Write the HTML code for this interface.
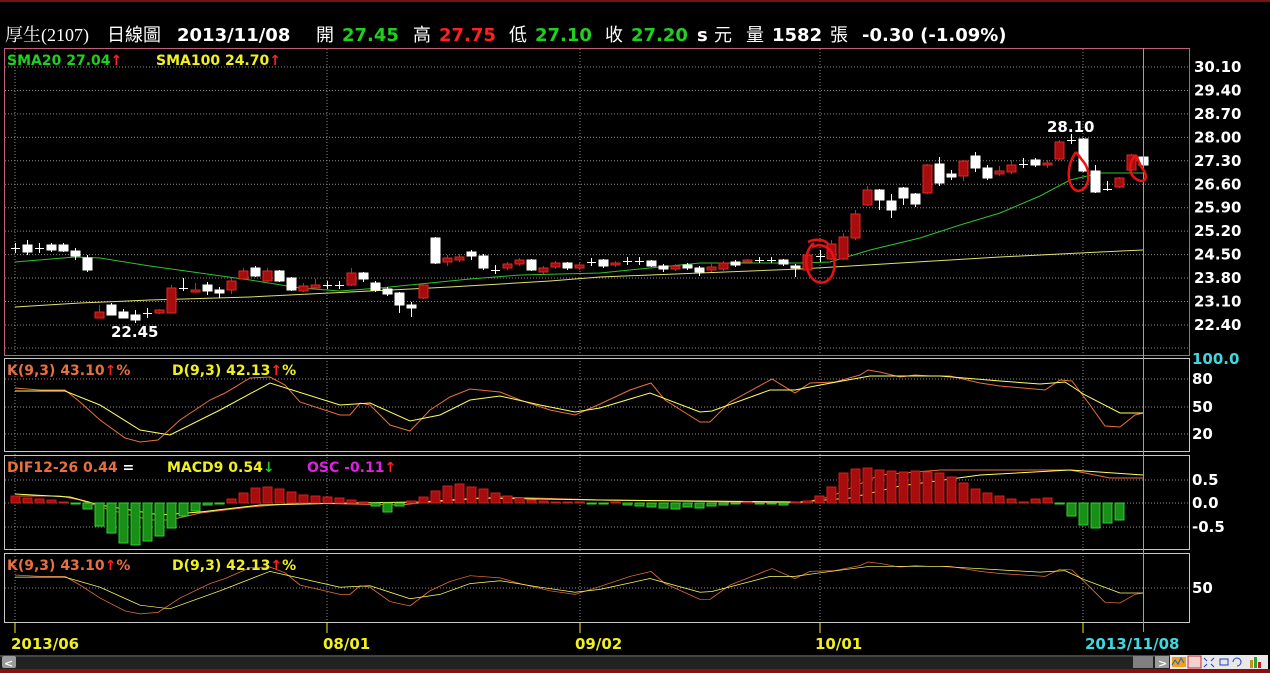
<!DOCTYPE html>
<html><head><meta charset="utf-8"><style>
html,body{margin:0;padding:0;background:#000;width:1270px;height:673px;overflow:hidden}
svg{display:block}
text{font-family:"DejaVu Sans","Noto Sans CJK TC",sans-serif;font-weight:bold}
.cj{font-family:"Noto Sans CJK TC",sans-serif;font-weight:normal}
</style></head><body>
<svg id="s" width="1270" height="673" xmlns="http://www.w3.org/2000/svg">
<rect x="0" y="0" width="1270" height="673" fill="#000"/>
<rect x="0" y="0" width="1270" height="2" fill="#7a1010"/>
<g id="grid" stroke="#8a8a8a" stroke-width="1" stroke-dasharray="1,2" fill="none"></g>
<!-- header -->
<text y="41" font-size="18" fill="#fff"><tspan x="5" font-family="Liberation Serif,'Noto Serif CJK TC',serif" font-weight="normal">厚生(2107)</tspan><tspan x="107" class="cj">日線圖</tspan><tspan x="177">2013/11/08</tspan><tspan x="316" class="cj">開</tspan><tspan x="342" fill="#20d020">27.45</tspan><tspan x="413" class="cj">高</tspan><tspan x="439" fill="#ff2020">27.75</tspan><tspan x="509" class="cj">低</tspan><tspan x="535" fill="#20d020">27.10</tspan><tspan x="605" class="cj">收</tspan><tspan x="631" fill="#20d020">27.20</tspan><tspan x="697">s</tspan><tspan x="714" class="cj">元</tspan><tspan x="746" class="cj">量</tspan><tspan x="772">1582</tspan><tspan x="830" class="cj">張</tspan><tspan x="862">-0.30 (-1.09%)</tspan></text>
<!-- frames -->
<rect x="4.5" y="48.5" width="1185" height="307" fill="none" stroke="#c06078"/>
<rect x="4.5" y="358.5" width="1185" height="93" fill="none" stroke="#c8c8c8"/>
<rect x="4.5" y="455.5" width="1185" height="94" fill="none" stroke="#c8c8c8"/>
<rect x="4.5" y="553.5" width="1185" height="69" fill="none" stroke="#c8c8c8"/>
<g id="lines" fill="none" stroke-width="1"></g>
<g id="candles"></g>
<g id="macd"></g>
<line x1="1143.5" y1="48" x2="1143.5" y2="632" stroke="#40c8d0" stroke-width="1"/>
<g fill="none" stroke="#ee1010" stroke-width="2.5">
<path d="M814,243 C804,250 803,272 815,281 C830,288 838,270 833,255 C828,244 818,244 812,247 M808,242 C816,238 826,240 828,244"/>
<path d="M1076,152 C1066,165 1066,188 1078,191 C1090,190 1092,170 1082,160 C1079,156 1077,153 1076,152"/>
<path d="M1136,155 C1128,162 1128,176 1138,180 C1147,184 1148,175 1142,168 C1139,163 1138,159 1136,155"/>
</g>
<text x="1047" y="132" font-size="15" fill="#fff">28.10</text>
<text x="111" y="337" font-size="15" fill="#fff">22.45</text>
<g font-size="14">
<text x="7" y="65" fill="#20d020">SMA20 27.04<tspan fill="#ff2020">↑</tspan></text>
<text x="156" y="65" fill="#f0f020">SMA100 24.70<tspan fill="#ff2020">↑</tspan></text>
<text x="7" y="375" fill="#e87040">K(9,3) 43.10<tspan fill="#ff2020">↑</tspan>%</text>
<text x="172" y="375" fill="#f0f020">D(9,3) 42.13<tspan fill="#ff2020">↑</tspan>%</text>
<text x="7" y="472" fill="#e87040">DIF12-26 0.44<tspan fill="#fff"> =</tspan></text>
<text x="167" y="472" fill="#f0f020">MACD9 0.54<tspan fill="#20d020">↓</tspan></text>
<text x="307" y="472" fill="#e020e0">OSC -0.11<tspan fill="#ff2020">↑</tspan></text>
<text x="7" y="570" fill="#e87040">K(9,3) 43.10<tspan fill="#ff2020">↑</tspan>%</text>
<text x="172" y="570" fill="#f0f020">D(9,3) 42.13<tspan fill="#ff2020">↑</tspan>%</text>
</g>
<g id="axis" font-size="15" fill="#fff"></g>
<g stroke="#f0f020"><line x1="15" y1="622" x2="15" y2="633"/><line x1="327" y1="622" x2="327" y2="633"/><line x1="580" y1="622" x2="580" y2="633"/><line x1="820" y1="622" x2="820" y2="633"/><line x1="1083" y1="622" x2="1083" y2="633"/></g>
<g font-size="15" fill="#f0f020">
<text x="11" y="649">2013/06</text><text x="323" y="649">08/01</text><text x="575" y="649">09/02</text><text x="815" y="649">10/01</text>
<text x="1085" y="649" fill="#40d8e0">2013/11/08</text></g>
<rect x="0" y="655" width="1170" height="14" fill="#222"/>
<rect x="0" y="655" width="1170" height="2" fill="#444"/>
<rect x="2" y="656" width="14" height="12" fill="#9a9a9a" rx="2"/>
<text x="4" y="667" font-size="11" fill="#fff">&lt;</text>
<rect x="1133" y="656" width="20" height="12" fill="#808080"/>
<rect x="1155" y="656" width="14" height="12" fill="#9a9a9a"/>
<text x="1158" y="667" font-size="11" fill="#fff">&gt;</text>
<rect x="1170" y="655" width="98" height="14" fill="#e8e8e8"/>
<rect x="1172" y="657" width="14" height="10" fill="#f0a020"/><path d="M1172,665 l3,-5 3,4 3,-6 3,5" stroke="#2060c0" fill="none"/>
<rect x="1188" y="656" width="13" height="12" fill="#f4d0d0" stroke="#c03030"/>
<g stroke="#2040c0" fill="none"><path d="M1204,658 l3,3 M1214,658 l-3,3 M1204,667 l3,-3 M1214,667 l-3,-3"/><rect x="1220" y="659" width="8" height="6"/><path d="M1233,662 a4,4 0 1 1 4,4"/></g>
<rect x="1250" y="660" width="3" height="8" fill="#c09020"/><rect x="1254" y="657" width="3" height="11" fill="#30a030"/><rect x="1258" y="662" width="3" height="6" fill="#c02020"/>
<rect x="0" y="669" width="1270" height="4" fill="#8a1010"/>
</svg>
<script>
const NS="http://www.w3.org/2000/svg";
function el(p,t,a){const e=document.createElementNS(NS,t);for(const k in a)e.setAttribute(k,a[k]);p.appendChild(e);return e;}
const g=document.getElementById('grid');
const labels=["30.10","29.40","28.70","28.00","27.30","26.60","25.90","25.20","24.50","23.80","23.10","22.40"];
const ax=document.getElementById('axis');
labels.forEach((l,i)=>{const y=67+i*23.45;el(g,'line',{x1:5,x2:1189,y1:y,y2:y});const t=el(ax,'text',{x:1194,y:y+5});t.textContent=l;});
el(g,'line',{x1:5,x2:1189,y1:348,y2:348});
[[379,"80"],[407,"50"],[434,"20"]].forEach(([y,l])=>{el(g,'line',{x1:5,x2:1189,y1:y,y2:y});const t=el(ax,'text',{x:1192,y:y+5});t.textContent=l;});
const c=el(ax,'text',{x:1192,y:364,fill:'#40d8e0'});c.textContent="100.0";
[[480,"0.5"],[503,"0.0"],[527,"-0.5"]].forEach(([y,l])=>{el(g,'line',{x1:5,x2:1189,y1:y,y2:y});const t=el(ax,'text',{x:1192,y:y+5});t.textContent=l;});
el(g,'line',{x1:5,x2:1189,y1:588,y2:588});{const t=el(ax,'text',{x:1192,y:593});t.textContent="50";}
[15,327,580,820,1083].forEach(x=>{el(g,'line',{x1:x,x2:x,y1:49,y2:622});});
const C=[
[15,248,248,'x',243,253],[27,245,252,'w',240,255],[39,248,250,'x',243,253],[51,245,250,'w',243,252],[63,245,251,'w',243,252],[75,251,256,'w',248,260],[87,258,270,'w',255,272],
[99,312,318,'r',305,318],[111,305,315,'w',303,315],[123,312,318,'w',309,318],[135,315,320,'w',310,323],[147,313,313,'x',308,318],[159,310,313,'r',309,314],[171,288,313,'r',285,313],
[183,288,288,'x',278,291],[195,290,292,'r',283,293],[207,285,291,'w',282,295],[219,290,293,'w',287,298],[231,281,290,'r',278,294],[243,271,279,'r',268,280],[255,268,276,'w',266,277],
[267,271,281,'r',268,283],[279,271,281,'w',270,282],[291,278,290,'w',277,291],[303,286,291,'r',283,292],[315,285,288,'r',279,290],[327,285,285,'x',281,289],[339,285,285,'x',281,289],
[351,273,285,'r',268,286],[363,273,279,'w',272,282],[375,283,290,'w',281,292],[387,289,294,'w',287,296],[399,293,305,'w',292,313],[411,305,308,'w',302,317],[423,285,298,'r',284,299],
[435,238,263,'w',237,264],[447,258,262,'r',255,266],[459,257,260,'r',254,262],[471,252,256,'w',250,260],[483,256,268,'w',254,270],[495,270,270,'x',265,274],[507,264,268,'r',262,270],
[519,260,264,'r',258,266],[531,260,270,'w',259,271],[543,268,272,'r',266,274],[555,263,267,'r',261,269],[567,263,268,'w',262,270],[579,265,268,'r',263,270],[591,262,262,'x',258,266],
[603,260,266,'w',259,268],[615,263,265,'r',261,267],[627,261,261,'x',257,265],[639,261,261,'x',257,265],[651,261,266,'w',260,267],[663,266,269,'w',264,272],[675,266,269,'r',264,271],
[687,265,268,'w',263,270],[699,268,272,'w',266,276],[711,267,270,'r',263,272],[723,263,269,'r',261,271],[735,262,265,'w',260,267],[747,260,262,'r',259,264],[759,260,260,'x',257,263],
[771,260,260,'x',257,263],[783,260,264,'w',259,266],[795,266,268,'w',264,277],[807,255,270,'r',254,271],[820,256,256,'x',250,262],[831,244,259,'r',240,260],[843,237,259,'r',233,260],
[855,214,238,'r',210,240],[867,190,205,'r',186,206],[879,190,200,'w',189,210],[891,201,210,'w',194,218],[903,188,198,'w',187,205],[915,194,204,'w',193,207],[927,165,193,'r',164,194],
[939,164,183,'w',157,186],[951,174,177,'w',170,180],[963,161,176,'r',160,181],[975,156,168,'w',152,172],[987,168,178,'w',165,180],[999,171,174,'r',166,176],[1011,165,172,'r',160,174],
[1023,164,164,'x',158,168],[1035,160,165,'w',158,167],[1047,163,165,'r',160,168],[1059,142,159,'r',140,160],[1071,140,140,'x',134,144],[1083,139,171,'w',138,172],[1095,171,192,'w',165,193],
[1107,189,189,'x',181,191],[1119,178,187,'r',177,188],[1131,155,170,'r',154,171],[1143,157,165,'w',145,166]];
const cg=document.getElementById('candles');
C.forEach(([x,t,b,k,wt,wb])=>{
 el(cg,'line',{x1:x+0.5,x2:x+0.5,y1:wt,y2:wb,stroke:k=='r'?'#d02020':'#fff'});
 if(k=='x'){el(cg,'line',{x1:x-4,x2:x+5,y1:t+0.5,y2:t+0.5,stroke:'#fff'});}
 else{const h=Math.max(2,b-t);el(cg,'rect',{x:x-4,y:t,width:9,height:h,fill:k=='r'?'#a80c0c':'#fff',stroke:k=='r'?'#e02828':'#fff','stroke-width':1});}
});
const lg=document.getElementById('lines');
function pl(pts,col,tf){const e=el(lg,'polyline',{points:pts.map(p=>p.join(',')).join(' '),stroke:col});if(tf)e.setAttribute('transform',tf);}
pl([[15,262],[75,257],[100,258],[150,266],[200,273],[250,280],[300,288],[340,291],[380,288],[420,284],[470,279],[520,275],[600,273],[700,263],[800,263],[830,262],[870,250],[920,238],[960,225],[1000,213],[1040,196],[1070,180],[1100,173],[1143,173]],'#30c030');
pl([[15,307],[80,303],[150,300],[250,297],[350,292],[450,287],[550,281],[600,277],[700,273],[800,269],[900,263],[1000,257],[1100,252],[1143,250]],'#e0e070');
const K=[[15,388],[40,390],[65,390],[80,402],[100,420],[125,438],[140,442],[158,440],[180,420],[210,400],[225,393],[250,378],[270,377],[285,385],[300,402],[340,415],[350,415],[360,403],[370,405],[390,425],[410,431],[430,410],[450,397],[470,389],[500,392],[520,400],[550,410],[575,415],[600,404],[630,390],[651,383],[665,400],[700,422],[710,422],[730,402],[772,379],[795,393],[810,383],[835,382],[860,375],[868,370],[880,372],[900,377],[915,375],[930,376],[950,376],[980,383],[1000,386],[1045,390],[1060,380],[1072,381],[1090,405],[1105,426],[1120,427],[1135,415],[1143,413]];
const D=[[15,391],[65,391],[100,405],[140,430],[170,435],[220,410],[270,383],[340,405],[370,403],[410,421],[440,415],[470,400],[500,396],[540,405],[575,412],[600,408],[650,393],[700,412],[712,411],[770,390],[795,390],[820,385],[870,376],[940,376],[1000,381],[1040,384],[1065,382],[1085,395],[1120,413],[1143,413]];
pl(K,'#e87040');pl(D,'#ffff60');
pl(K,'#e87040',"matrix(1,0,0,0.72,0,295.6)");
pl(D,'#ffff60',"matrix(1,0,0,0.72,0,295.6)");
const H=[7,5,4,3,1,-1,-6,-23,-30,-40,-42,-38,-33,-25,-13,-8,-2,-1,4,10,15,16,14,11,8,7,6,5,3,0,-3,-9,-3,2,6,12,17,19,16,14,10,7,5,3,2,1,1,0,-1,-1,0,-2,-3,-4,-5,-6,-4,-5,-3,-2,-1,0,-1,-1,-2,0,2,7,16,30,34,35,33,32,31,32,31,30,26,20,14,10,7,4,1,4,5,-1,-13,-22,-25,-20,-17];
const mg=document.getElementById('macd');
H.forEach((h,i)=>{const x=15+12*i;if(x>1143)return;const up=h>=0;const hh=Math.max(1,Math.abs(h));
 el(mg,'rect',{x:x-4,y:up?503-hh:503,width:9,height:hh,fill:up?'#a80c0c':'#189018',stroke:up?'#d02020':'#30d030','stroke-width':1});});
pl([[15,496],[60,496],[80,500],[110,510],[150,520],[170,520],[200,513],[250,507],[300,503],[400,505],[420,503],[500,497],[600,500],[800,503],[830,497],[880,475],[940,470],[1000,470],[1070,470],[1110,478],[1143,478]],'#e87040');
pl([[15,494],[70,497],[100,505],[160,515],[200,512],[260,505],[350,503],[420,502],[480,498],[600,500],[800,502],[850,498],[900,486],[980,475],[1070,470],[1143,475]],'#ffff60');
</script>
</body></html>
